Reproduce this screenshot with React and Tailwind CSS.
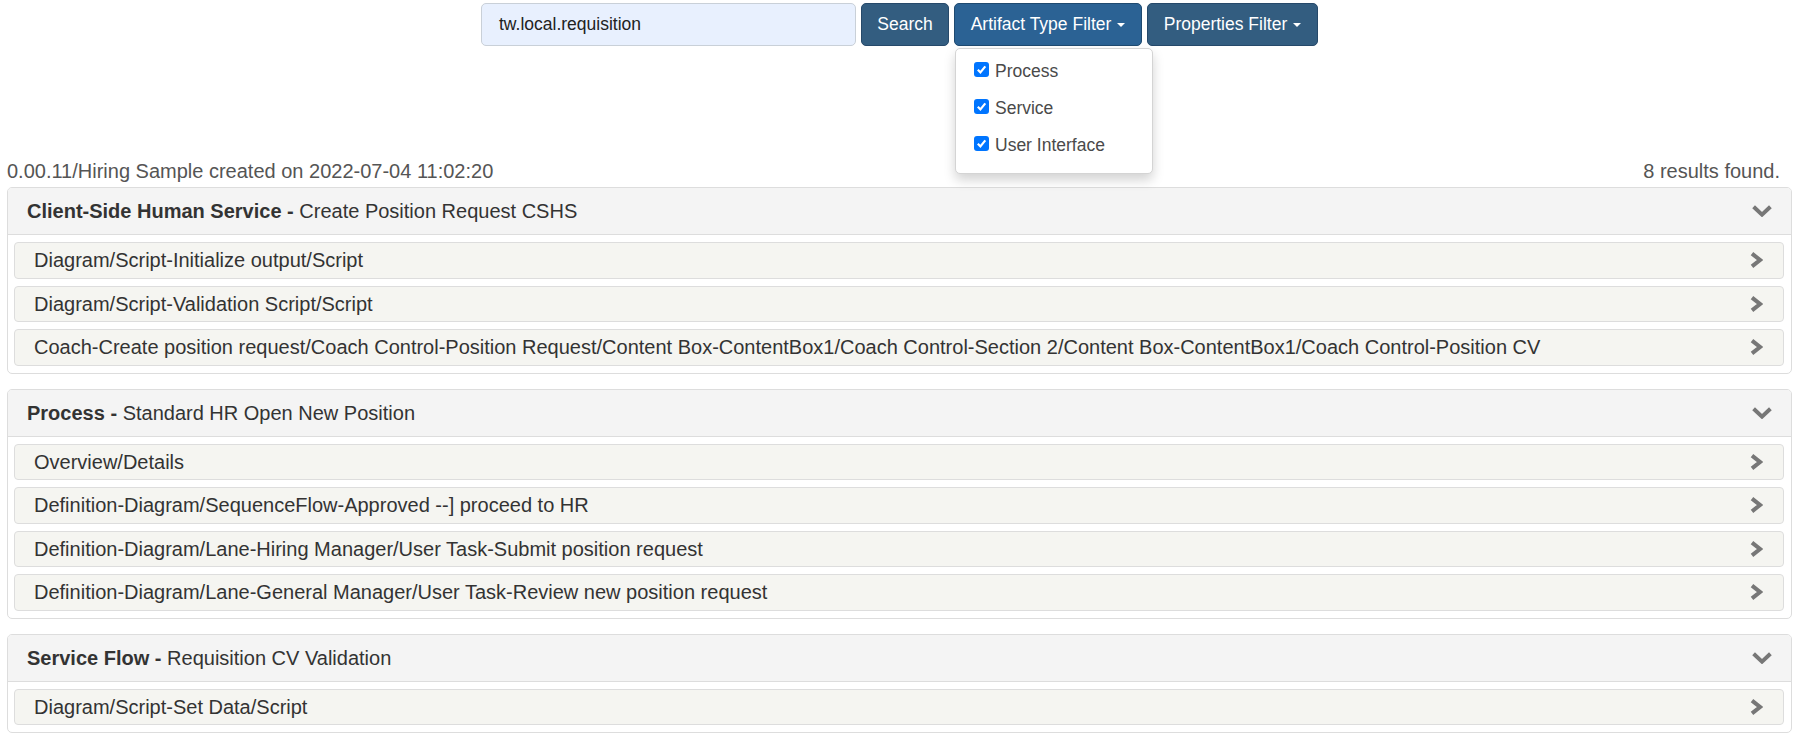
import React from 'react'

const groups = [
  {
    type: 'Client-Side Human Service',
    name: 'Create Position Request CSHS',
    items: [
      'Diagram/Script-Initialize output/Script',
      'Diagram/Script-Validation Script/Script',
      'Coach-Create position request/Coach Control-Position Request/Content Box-ContentBox1/Coach Control-Section 2/Content Box-ContentBox1/Coach Control-Position CV',
    ],
  },
  {
    type: 'Process',
    name: 'Standard HR Open New Position',
    items: [
      'Overview/Details',
      'Definition-Diagram/SequenceFlow-Approved --] proceed to HR',
      'Definition-Diagram/Lane-Hiring Manager/User Task-Submit position request',
      'Definition-Diagram/Lane-General Manager/User Task-Review new position request',
    ],
  },
  {
    type: 'Service Flow',
    name: 'Requisition CV Validation',
    items: ['Diagram/Script-Set Data/Script'],
  },
]

const filters = ['Process', 'Service', 'User Interface']

const ChevronRight = () => (
  <svg width="13" height="16" viewBox="0 0 13 16" className="shrink-0">
    <polyline points="2,1.6 10,8 2,14.4" fill="none" stroke="#777" strokeWidth="4" />
  </svg>
)

const ChevronDown = () => (
  <svg width="20" height="12" viewBox="0 0 20 12" className="shrink-0">
    <polyline points="1.6,1.8 10,9.6 18.4,1.8" fill="none" stroke="#777" strokeWidth="4" />
  </svg>
)

const Caret = () => (
  <svg width="8" height="4" viewBox="0 0 8 4" className="ml-[6px]">
    <polygon points="0,0 8,0 4,4" fill="#fff" />
  </svg>
)

const Check = () => (
  <span className="w-[15px] h-[15px] rounded-[3px] bg-[#0075ff] flex items-center justify-center shrink-0">
    <svg width="11" height="11" viewBox="0 0 11 11">
      <polyline points="1.8,5.8 4.4,8.4 9.3,2.4" fill="none" stroke="#fff" strokeWidth="2.2" />
    </svg>
  </span>
)

const App = () => {
  return (
    <div className="min-h-screen bg-white font-['Liberation_Sans',Arial,sans-serif] text-[#333]">
      {/* search bar */}
      <div className="flex justify-center pt-[3px] pl-[6px]">
        <div className="flex gap-[5px]">
          <div className="w-[375px] h-[43px] rounded-[5px] border border-[#c9d0d8] bg-[#e8f0fe] flex items-center pl-[17px] text-[17.5px] text-[#222]">
            tw.local.requisition
          </div>
          <button className="w-[88px] h-[43px] rounded-[5px] border border-[#26496a] bg-[#335d80] text-white text-[17.5px]">
            Search
          </button>
          <div className="relative">
            <button className="w-[188px] h-[43px] rounded-[5px] border border-[#1f4a70] bg-[#2b6294] text-white text-[17.5px] flex items-center justify-center">
              Artifact Type Filter
              <Caret />
            </button>
            <div className="absolute left-[1px] top-[45px] w-[198px] h-[126px] bg-white border border-[#d4d4d4] rounded-[5px] shadow-[0_6px_12px_rgba(0,0,0,0.175)] pt-[4px] z-10">
              {filters.map((f) => (
                <div key={f} className="h-[37px] flex items-center pl-[18px] gap-[6px] text-[17.5px] text-[#4a4a4a]">
                  <span className="-mt-[5px]">
                    <Check />
                  </span>
                  {f}
                </div>
              ))}
            </div>
          </div>
          <button className="w-[171px] h-[43px] rounded-[5px] border border-[#26496a] bg-[#335d80] text-white text-[17.5px] flex items-center justify-center">
            Properties Filter
            <Caret />
          </button>
        </div>
      </div>

      {/* info line */}
      <div className="mt-[111px] h-[28px] leading-[28px] flex justify-between pl-[7px] pr-[13px] text-[20px] text-[#555]">
        <span>0.00.11/Hiring Sample created on 2022-07-04 11:02:20</span>
        <span>8 results found.</span>
      </div>

      {/* result panels */}
      <div className="mt-[2px] ml-[7px] mr-[1px] flex flex-col gap-[15px]">
        {groups.map((g) => (
          <div key={g.name} className="border border-[#ddd] rounded-[5px] overflow-hidden">
            <div className="h-[47px] bg-[#f4f4f4] border-b border-[#ddd] flex items-center justify-between pl-[19px] pr-[19px] text-[20px]">
              <span>
                <span className="font-bold">{g.type} -</span> {g.name}
              </span>
              <ChevronDown />
            </div>
            <div className="pt-[7px] pb-[7px] pl-[6px] pr-[7px] flex flex-col gap-[7px]">
              {g.items.map((it) => (
                <div
                  key={it}
                  className="h-[36.5px] bg-[#f5f5f1] border border-[#ddd] rounded-[4px] flex items-center justify-between pl-[19px] pr-[20px] text-[20px]"
                >
                  <span className="whitespace-nowrap">{it}</span>
                  <ChevronRight />
                </div>
              ))}
            </div>
          </div>
        ))}
      </div>
    </div>
  )
}

export default App
